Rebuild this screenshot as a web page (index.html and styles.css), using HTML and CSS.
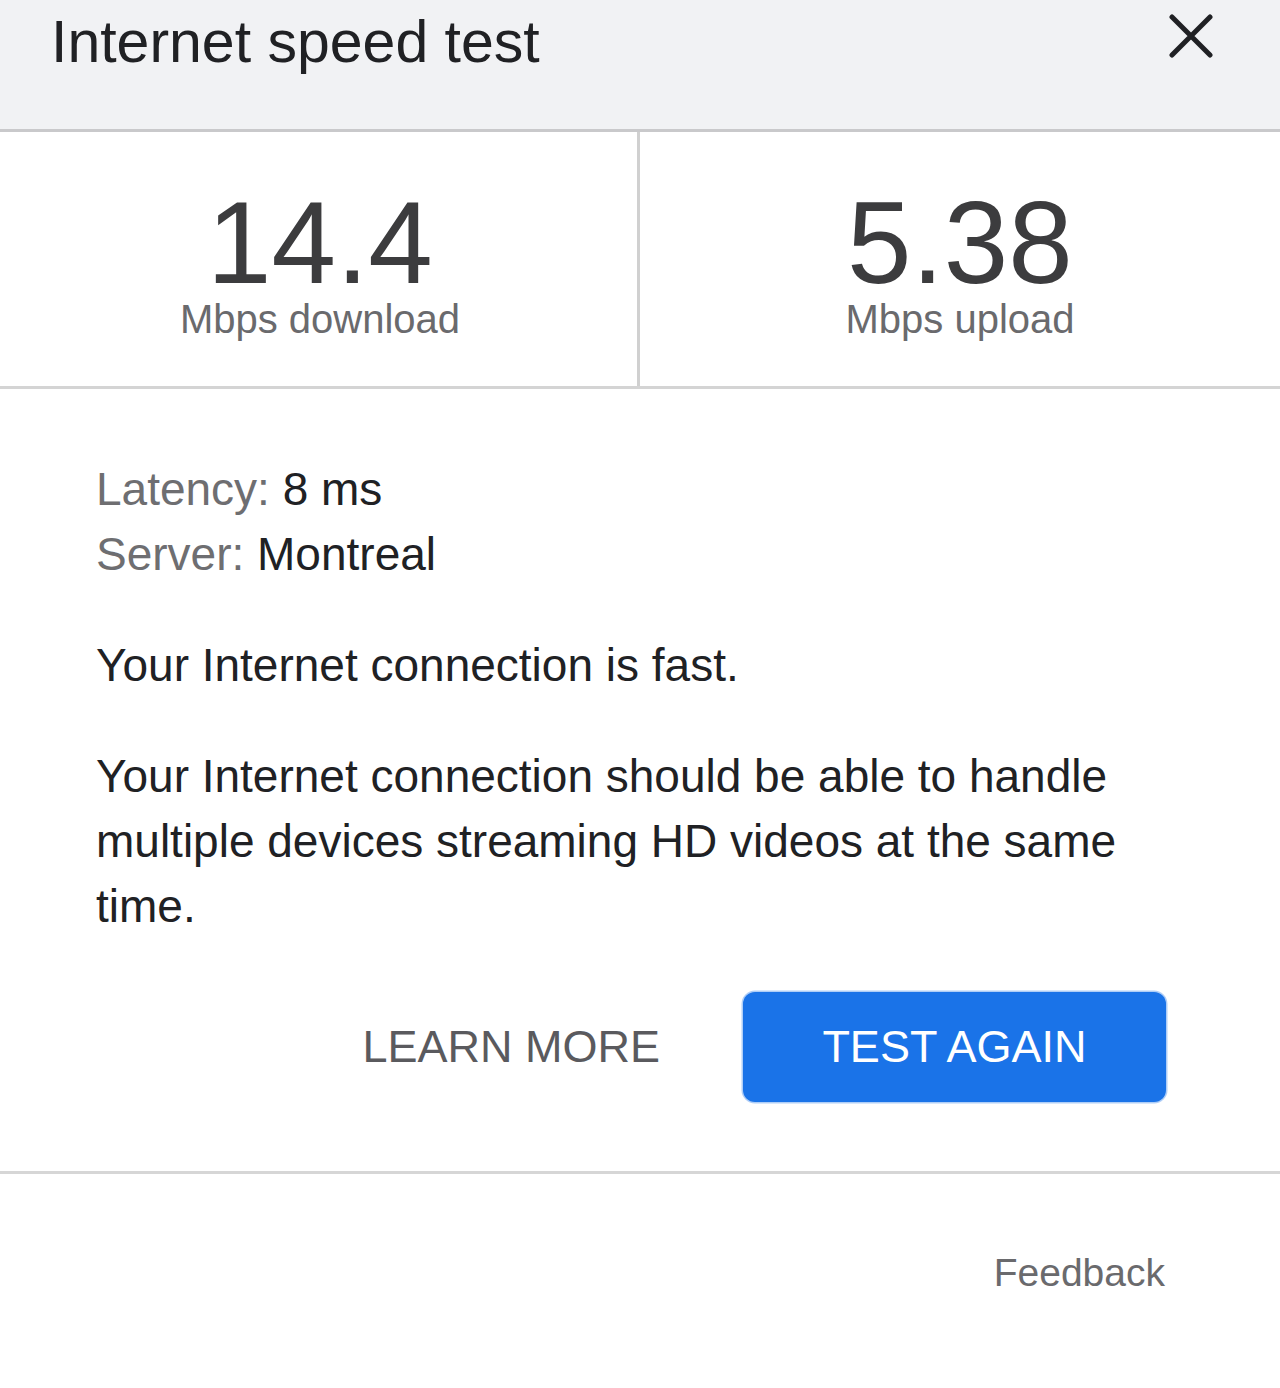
FILE: index.html
```html
<!DOCTYPE html>
<html lang="en">
<head>
    <meta charset="UTF-8">
    <meta name="viewport" content="width=device-width, initial-scale=1.0">
    <title>Internet speed test</title>
    <link rel="stylesheet" href="styles.css">
</head>
<body>
    <!-- Заголовок -->
    <header class="top-bar">
        <h1 class="title">Internet speed test</h1>
        <button class="close-btn" aria-label="Close">
            <svg width="44" height="44" viewBox="0 0 44 44">
                <path d="M3 3 L41 41 M41 3 L3 41" stroke="#202124" stroke-width="5" stroke-linecap="round" fill="none"/>
            </svg>
        </button>
    </header>

    <!-- Результаты -->
    <section class="stats">
        <div class="stat">
            <div class="stat-value">14.4</div>
            <div class="stat-label">Mbps download</div>
        </div>
        <div class="stat">
            <div class="stat-value">5.38</div>
            <div class="stat-label">Mbps upload</div>
        </div>
    </section>

    <!-- Детали -->
    <main class="details">
        <div class="meta">
            <div><span class="meta-key">Latency:</span> 8 ms</div>
            <div><span class="meta-key">Server:</span> Montreal</div>
        </div>
        <p class="text">Your Internet connection is fast.</p>
        <p class="text">Your Internet connection should be able to handle multiple devices streaming HD videos at the same time.</p>

        <div class="actions">
            <button class="link-btn">LEARN MORE</button>
            <button class="primary-btn">TEST AGAIN</button>
        </div>
    </main>

    <footer class="footer">
        <a href="#" class="feedback">Feedback</a>
    </footer>
</body>
</html>
```

FILE: styles.css
```css
/* Основной стиль */
body {
    font-family: "Liberation Sans", Arial, sans-serif;
    background: #fff;
    color: #202124;
    margin: 0;
    padding: 0;
}
button {
    font-family: inherit;
    border: none;
    background: none;
    cursor: pointer;
}

.top-bar {
    display: flex;
    justify-content: space-between;
    align-items: flex-start;
    height: 129px;
    background: #f1f2f4;
    border-bottom: 3px solid #c9c9cb;
    box-sizing: content-box;
}
.title {
    margin: 0;
    padding: 8px 0 0 51px;
    font-size: 59px;
    line-height: 68px;
    font-weight: normal;
    color: #202124;
}
.close-btn {
    margin: 14px 67px 0 0;
    padding: 0;
    width: 44px;
    height: 44px;
}

.stats {
    display: grid;
    grid-template-columns: 1fr 1fr;
    height: 254px;
    border-bottom: 3px solid #d4d4d4;
}
.stat {
    text-align: center;
    padding-top: 55px;
}
.stat:first-child {
    border-right: 3px solid #d0d0d0;
}
.stat-value {
    font-size: 116px;
    line-height: 112px;
    color: #3c3c3e;
}
.stat:first-child .stat-value,
.stat:first-child .stat-label {
    margin-right: -3px;
}
.stat-label {
    font-size: 40px;
    line-height: 40px;
    color: #6a6a6d;
}

.details {
    padding: 68px 100px 0 96px;
    font-size: 46px;
    line-height: 65px;
}
.meta-key {
    color: #6e6e71;
}
.text {
    margin: 46px 0 0 0;
    max-width: 1084px;
}

.actions {
    display: flex;
    justify-content: flex-end;
    align-items: center;
    gap: 43px;
    margin: 53px 14px 0 0;
    padding-bottom: 69px;
}
.link-btn {
    height: 110px;
    padding: 0 40px;
    font-size: 45px;
    color: #5a5a5e;
}
.primary-btn {
    width: 423px;
    height: 110px;
    font-size: 45px;
    color: #fff;
    background: #1a73e8;
    border-radius: 12px;
    box-shadow: 0 0 0 1.5px rgba(26, 115, 232, 0.35);
}

.footer {
    border-top: 3px solid #d6d6d6;
    padding: 76px 115px 0 0;
    text-align: right;
}
.feedback {
    font-size: 39px;
    line-height: 45px;
    color: #6a6a6d;
    text-decoration: none;
}
```
